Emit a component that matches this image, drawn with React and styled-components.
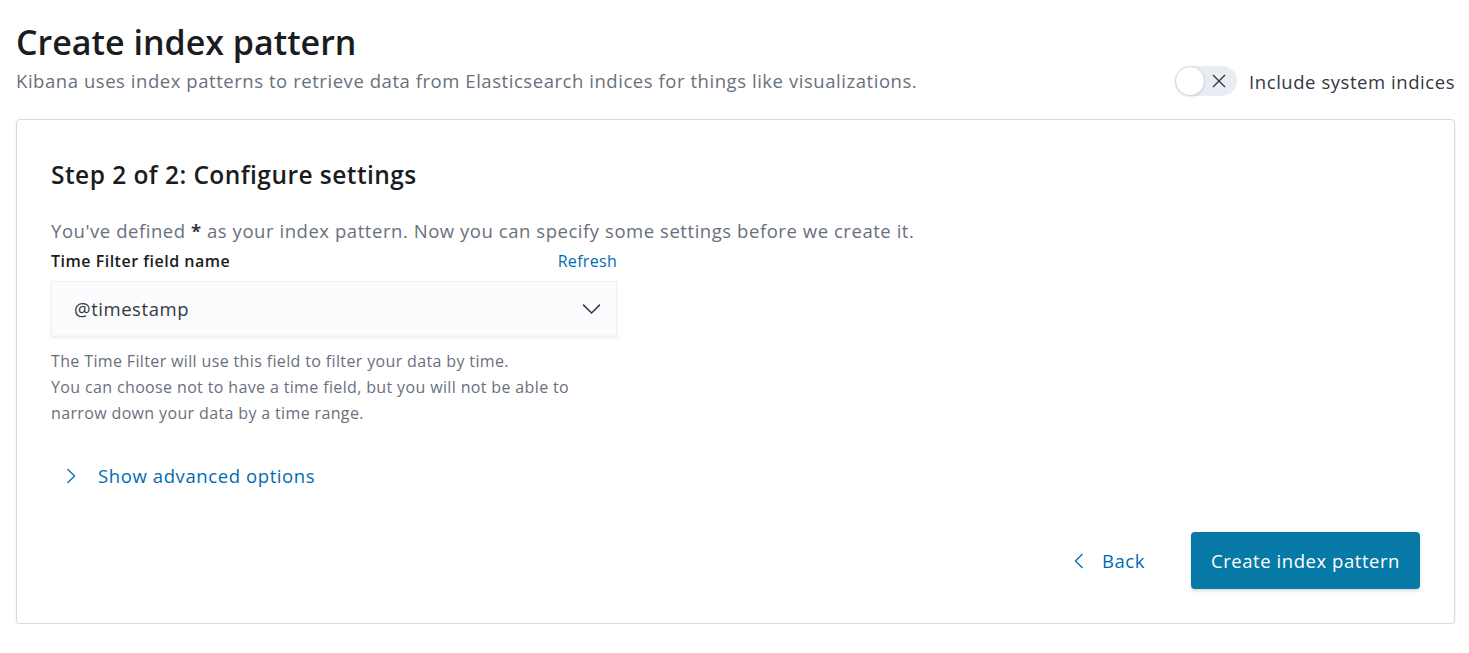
import React from "react";
import styled, { createGlobalStyle } from "styled-components";

const GlobalStyle = createGlobalStyle`
    body {
        margin: 0;
        background: #fff;
        font-family: "Open Sans", "Noto Sans", sans-serif;
        color: #343741;
    }
`;

const Page = styled.div`
    padding: 20px 14px 0 16px;
`;

const Header = styled.div`
    display: flex;
    justify-content: space-between;
    align-items: flex-end;
`;

const Title = styled.h1`
    margin: 0;
    font-size: 34px;
    line-height: 44px;
    font-weight: 600;
    color: #1a1c21;
`;

const Subtitle = styled.p`
    margin: 2px 0 0;
    font-size: 18.5px;
    letter-spacing: 0.55px;
    line-height: 30px;
    color: #69707d;
`;

const ToggleWrap = styled.label`
    display: flex;
    align-items: center;
    gap: 12px;
    font-size: 18.5px;
    letter-spacing: 0.55px;
    color: #343741;
    margin-bottom: 0;
`;

const Track = styled.span`
    position: relative;
    width: 62px;
    height: 30px;
    border-radius: 15px;
    background: #e9edf3;
    display: inline-flex;
    align-items: center;
    justify-content: flex-end;
    padding-right: 11px;
    box-sizing: border-box;
`;

const Knob = styled.span`
    position: absolute;
    left: 0;
    top: 0;
    width: 30px;
    height: 30px;
    border-radius: 50%;
    background: #fff;
    border: 1px solid #d3dae6;
    box-sizing: border-box;
    box-shadow: 0 1px 2px rgba(0, 0, 0, 0.12);
`;

const Panel = styled.div`
    margin-top: 23px;
    border: 1px solid #d3dae6;
    border-radius: 4px;
    box-shadow: 0 1px 3px rgba(0, 0, 0, 0.08), 0 2px 2px -1px rgba(0, 0, 0, 0.06);
    padding: 35px 34px 34px 34px;
    height: 505px;
    box-sizing: border-box;
    display: flex;
    flex-direction: column;
`;

const StepTitle = styled.h2`
    margin: 0;
    font-size: 24.5px;
    letter-spacing: 0.45px;
    line-height: 40px;
    font-weight: 600;
    color: #1a1c21;
`;

const Intro = styled.p`
    margin: 20px 0 0;
    font-size: 18.5px;
    letter-spacing: 0.55px;
    line-height: 32px;
    color: #69707d;

    strong {
        color: #343741;
    }
`;

const Field = styled.div`
    width: 566px;
`;

const LabelRow = styled.div`
    display: flex;
    justify-content: space-between;
    align-items: baseline;
    font-size: 16px;
    line-height: 28px;
`;

const Label = styled.span`
    font-weight: 600;
    letter-spacing: 0.5px;
    color: #1a1c21;
`;

const LinkText = styled.span`
    color: #006bb4;
    letter-spacing: 0.3px;
`;

const Select = styled.div`
    margin-top: 6px;
    height: 56px;
    background: #fbfcfd;
    border: 1px solid #eef0f3;
    box-shadow: inset 0 -2px 0 rgba(0, 0, 0, 0.02), 0 1px 2px rgba(0, 0, 0, 0.08);
    display: flex;
    align-items: center;
    justify-content: space-between;
    padding: 0 16px 2px 22px;
    box-sizing: border-box;
    font-size: 18.5px;
    letter-spacing: 0.55px;
    color: #343741;
`;

const Help = styled.p`
    margin: 11px 0 0;
    font-size: 16px;
    letter-spacing: 0.36px;
    line-height: 26px;
    color: #69707d;
`;

const Accordion = styled.div`
    margin-top: 36px;
    padding-left: 12px;
    display: flex;
    align-items: center;
    gap: 19px;
    font-size: 18.5px;
    letter-spacing: 0.6px;
    color: #006bb4;
    line-height: 28px;
`;

const Footer = styled.div`
    margin-top: auto;
    display: flex;
    justify-content: flex-end;
    align-items: center;
    gap: 46px;
`;

const BackButton = styled.span`
    display: flex;
    align-items: center;
    gap: 15px;
    font-size: 18.5px;
    letter-spacing: 0.55px;
    color: #006bb4;
`;

const PrimaryButton = styled.span`
    display: flex;
    align-items: center;
    justify-content: center;
    width: 229px;
    height: 57px;
    border-radius: 4px;
    background: #0779a6;
    color: #fff;
    font-size: 18.5px;
    letter-spacing: 0.55px;
    box-shadow: 0 2px 3px rgba(0, 0, 0, 0.15);
`;

const Chevron = ({ dir = "down", size = 16, color = "#343741" }) => {
    const paths = {
        down: "M1 5l7.5 7.5 7.5-7.5",
        right: "M4.5 1l7 7-7 7",
        left: "M11.5 1l-7 7 7 7",
    };
    return (
        <svg width={size} height={size} viewBox="0 0 16 16" fill="none">
            <path d={paths[dir]} stroke={color} strokeWidth="1.3" />
        </svg>
    );
};

const App = () => (
    <Page>
        <GlobalStyle />
        <Header>
            <div>
                <Title>Create index pattern</Title>
                <Subtitle>
                    Kibana uses index patterns to retrieve data from Elasticsearch indices for things like visualizations.
                </Subtitle>
            </div>
            <ToggleWrap>
                <Track>
                    <Knob />
                    <svg width="14" height="14" viewBox="0 0 14 14">
                        <path d="M1 1l12 12M13 1L1 13" stroke="#343741" strokeWidth="1.4" />
                    </svg>
                </Track>
                Include system indices
            </ToggleWrap>
        </Header>

        <Panel>
            <StepTitle>Step 2 of 2: Configure settings</StepTitle>
            <Intro>
                You've defined <strong>*</strong> as your index pattern. Now you can specify some settings before we create it.
            </Intro>
            <Field>
                <LabelRow>
                    <Label>Time Filter field name</Label>
                    <LinkText>Refresh</LinkText>
                </LabelRow>
                <Select>
                    @timestamp
                    <Chevron dir="down" size={18} />
                </Select>
                <Help>
                    The Time Filter will use this field to filter your data by time.
                    <br />
                    You can choose not to have a time field, but you will not be able to narrow down your data by a time range.
                </Help>
            </Field>
            <Accordion>
                <Chevron dir="right" size={16} color="#006bb4" />
                Show advanced options
            </Accordion>
            <Footer>
                <BackButton>
                    <Chevron dir="left" size={16} color="#006bb4" />
                    Back
                </BackButton>
                <PrimaryButton>Create index pattern</PrimaryButton>
            </Footer>
        </Panel>
    </Page>
);

export default App;
